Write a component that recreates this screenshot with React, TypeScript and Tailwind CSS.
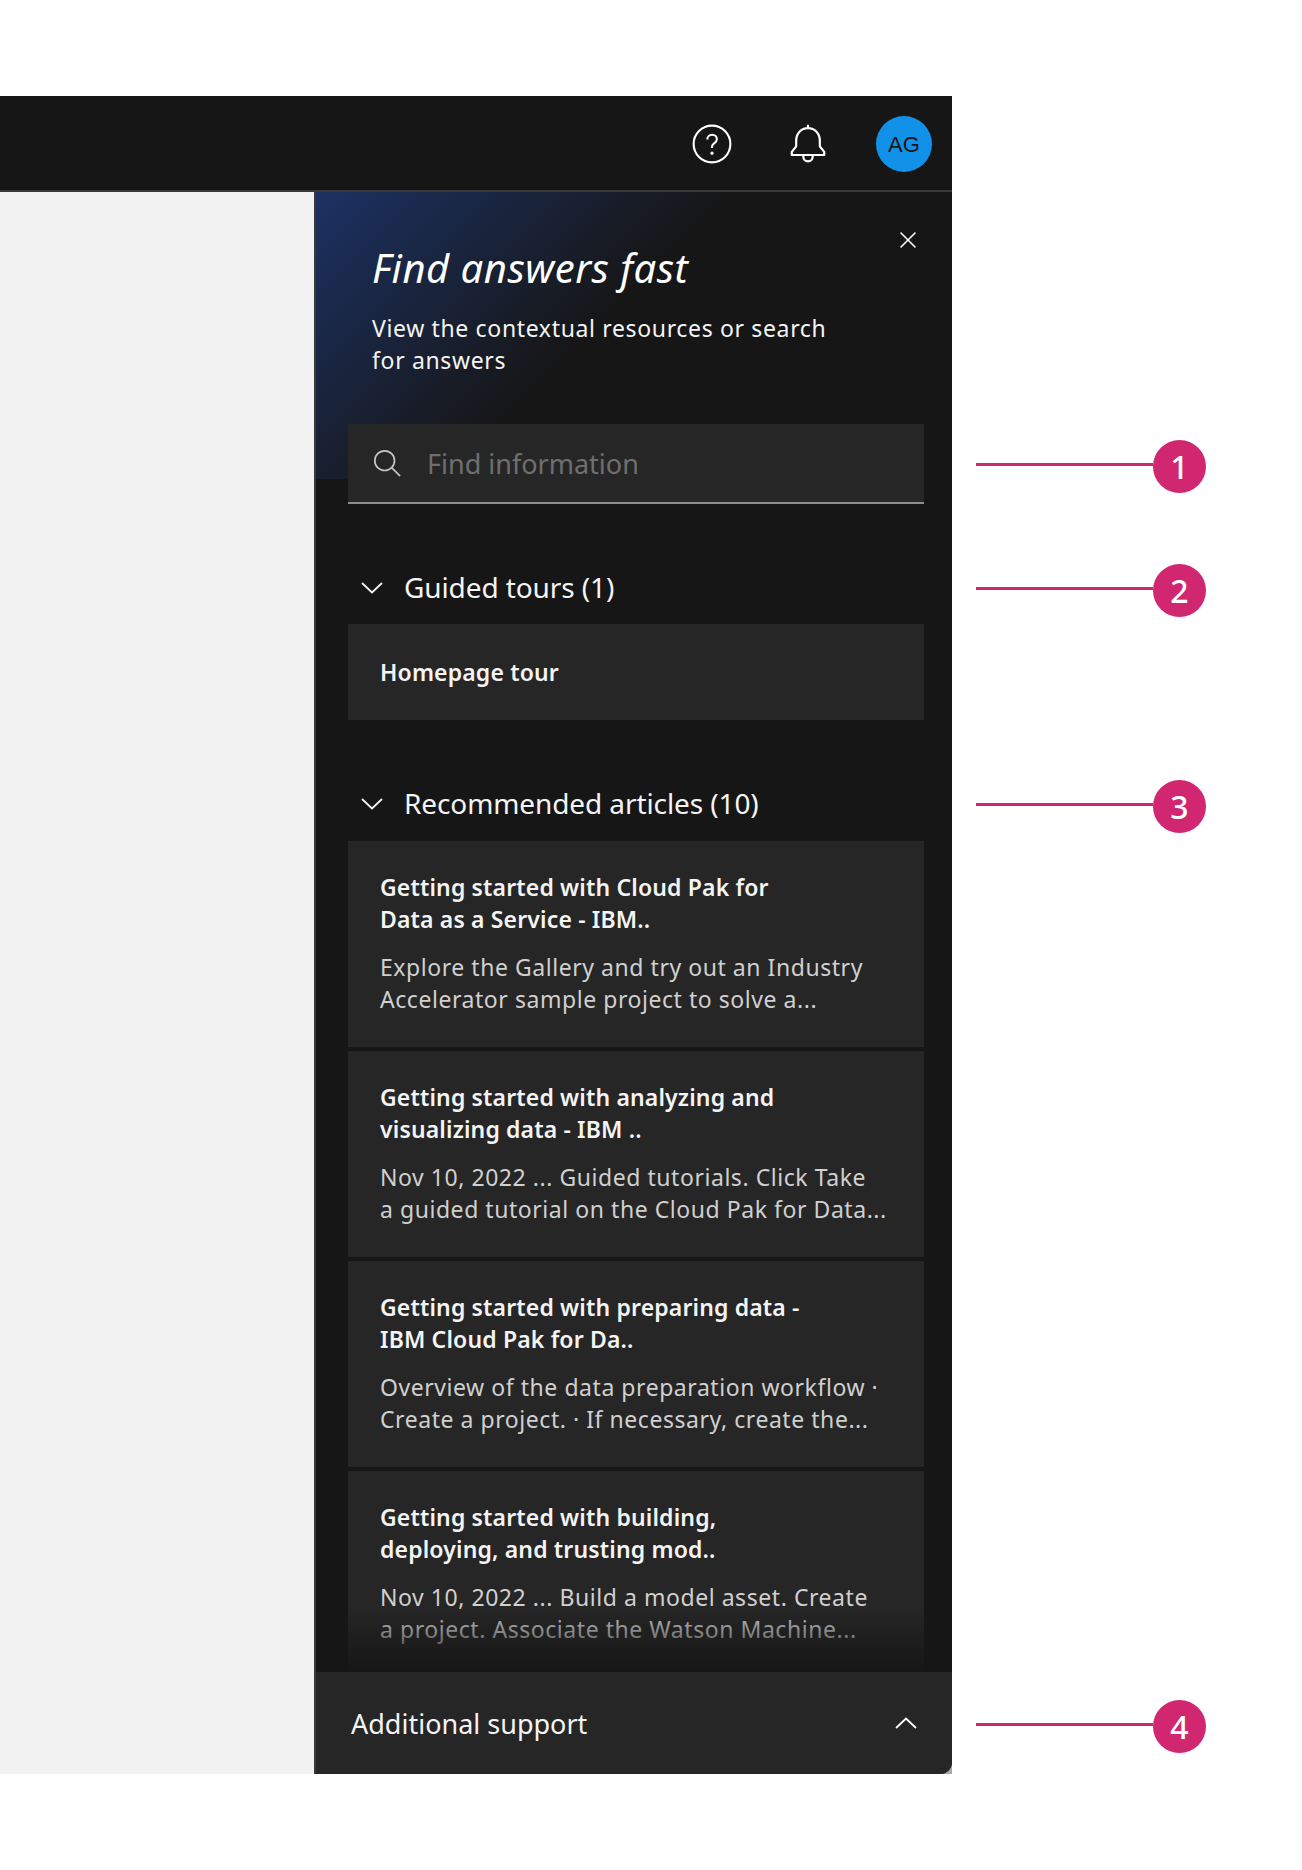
import { X } from 'lucide-react';

const articles = [
  {
    title: ['Getting started with Cloud Pak for', 'Data as a Service - IBM..'],
    body: ['Explore the Gallery and try out an Industry', 'Accelerator sample project to solve a...'],
  },
  {
    title: ['Getting started with analyzing and', 'visualizing data - IBM ..'],
    body: ['Nov 10, 2022 ... Guided tutorials. Click Take', 'a guided tutorial on the Cloud Pak for Data...'],
  },
  {
    title: ['Getting started with preparing data -', 'IBM Cloud Pak for Da..'],
    body: ['Overview of the data preparation workflow ·', 'Create a project. · If necessary, create the...'],
  },
  {
    title: ['Getting started with building,', 'deploying, and trusting mod..'],
    body: ['Nov 10, 2022 ... Build a model asset. Create', 'a project. Associate the Watson Machine...'],
  },
];

const callouts = [
  { n: 1, top: 'top-[440px]' },
  { n: 2, top: 'top-[564px]' },
  { n: 3, top: 'top-[780px]' },
  { n: 4, top: 'top-[1700px]' },
];

const Callout = ({ n, top }: { n: number; top: string }) => (
  <div className={`absolute left-[976px] ${top} flex items-center`}>
    <div className="h-[3px] w-[177px] -translate-y-[2px] bg-[#d12771]" />
    <div className="flex h-[53px] w-[53px] items-center justify-center rounded-full bg-[#d12771] text-[32px] font-medium text-white">
      {n}
    </div>
  </div>
);

const Chevron = ({ up = false, className }: { up?: boolean; className: string }) => (
  <svg viewBox="0 0 22 12" className={className} fill="none" stroke="currentColor" strokeWidth="1.8">
    <path d={up ? 'M1 11L11 1.5L21 11' : 'M1 1L11 10.5L21 1'} />
  </svg>
);

const SectionHeading = ({ label }: { label: string }) => (
  <div className="flex h-[72px] items-center">
    <Chevron className="ml-[13px] h-[12px] w-[22px] text-[#f4f4f4]" />
    <span className="ml-[21px] pb-[3px] text-[28px] tracking-[-0.1px] text-[#f4f4f4]">{label}</span>
  </div>
);

export default function App() {
  return (
    <div className="relative h-[1870px] w-full overflow-hidden bg-white font-['Noto_Sans',sans-serif]">
      <div className="pt-[96px] w-[952px]">
        <header className="flex h-[96px] items-center justify-end border-b-2 border-[#393939] bg-[#161616] pt-[2px]">
          <svg viewBox="0 0 32 32" className="h-[42px] w-[42px] text-white" fill="none" stroke="currentColor" strokeWidth="1.6">
            <circle cx="16" cy="16" r="14" />
            <path d="M12.4 12.6c0-2.1 1.6-3.6 3.7-3.6s3.6 1.4 3.6 3.3c0 1.6-.9 2.4-2.1 3.2-1.1.7-1.6 1.3-1.6 2.7v.8" />
            <circle cx="16" cy="23" r="1.2" fill="currentColor" stroke="none" />
          </svg>
          <svg viewBox="0 0 32 32" className="ml-[53px] h-[44px] w-[44px] text-white" fill="none" stroke="currentColor" strokeWidth="1.6" strokeLinejoin="round">
            <path d="M16 2v2.5M16 4.5c-5 0-8.6 3.8-8.6 9v4.2l-3.2 4v2.3h23.6v-2.3l-3.2-4v-4.2c0-5.2-3.6-9-8.6-9z" />
            <path d="M12.6 24v1.2c0 1.9 1.5 3.4 3.4 3.4s3.4-1.5 3.4-3.4V24" />
          </svg>
          <div className="ml-[46px] mr-[20px] flex h-[56px] w-[56px] items-center justify-center rounded-full bg-[#1192e8] font-['Liberation_Sans',sans-serif] text-[22px] text-[#161616]">
            AG
          </div>
        </header>
        <div className="flex h-[1582px] bg-[#a8a8a8]">
          <div className="w-[314px] bg-[#f2f2f2]" />
          <aside className="relative flex w-[638px] flex-col overflow-hidden rounded-br-[12px] border-l-2 border-[#393939] bg-[#161616]">
            <div className="absolute left-0 top-0 h-[287px] w-full bg-[linear-gradient(135deg,#1c3263_0%,#161616_45%)]" />
            <X className="absolute right-[30px] top-[34px] h-[28px] w-[28px] text-white" strokeWidth={1.3} />
            <div className="relative flex min-h-0 flex-1 flex-col overflow-hidden">
              <div className="shrink-0 pl-[56px] pt-[52px]">
                <h1 className="text-[40px] italic leading-[48px] tracking-[0.5px] text-white">Find answers fast</h1>
                <p className="mt-[20px] text-[23px] leading-[32px] tracking-[0.65px] text-[#f4f4f4]">
                  View the contextual resources or search
                  <br />
                  for answers
                </p>
              </div>
              <div className="ml-[32px] mr-[28px] mt-[48px] flex h-[80px] shrink-0 items-center border-b-2 border-[#8d8d8d] bg-[#262626] pl-[24px]">
                <svg viewBox="0 0 32 32" className="h-[30px] w-[30px] text-[#c6c6c6]" fill="none" stroke="currentColor" strokeWidth="1.8">
                  <circle cx="13.5" cy="13.5" r="10.5" />
                  <path d="M21 21l9 9" />
                </svg>
                <span className="ml-[25px] pt-[2px] text-[27px] text-[#6f6f6f]">Find information</span>
              </div>
              <div className="ml-[32px] mr-[28px] mt-[48px] shrink-0">
                <SectionHeading label="Guided tours (1)" />
              </div>
              <div className="ml-[32px] mr-[28px] flex h-[96px] shrink-0 items-center bg-[#262626] px-[32px] text-[23px] font-semibold tracking-[0.15px] text-[#f4f4f4]">
                Homepage tour
              </div>
              <div className="ml-[32px] mr-[28px] mt-[48px] shrink-0">
                <SectionHeading label="Recommended articles (10)" />
              </div>
              <div className="ml-[32px] mr-[28px] flex shrink-0 flex-col gap-[4px] pt-[1px]">
                {articles.map((a) => (
                  <article key={a.title[0]} className="h-[206px] shrink-0 bg-[#262626] px-[32px] pt-[31px]">
                    <h2 className="text-[23px] font-semibold leading-[31.5px] tracking-[0.15px] text-[#f4f4f4]">
                      {a.title[0]}
                      <br />
                      {a.title[1]}
                    </h2>
                    <p className="mt-[16px] text-[23px] leading-[32px] tracking-[0.55px] text-[#d0d0d0]">
                      {a.body[0]}
                      <br />
                      {a.body[1]}
                    </p>
                  </article>
                ))}
              </div>
              <div className="absolute bottom-0 left-0 h-[66px] w-full bg-gradient-to-b from-[#16161600] to-[#161616]" />
            </div>
            <footer className="flex h-[102px] shrink-0 items-center justify-between bg-[#262626] pl-[35px] pr-[35px]">
              <span className="pt-[2px] text-[27px] text-[#f4f4f4]">Additional support</span>
              <Chevron up className="h-[12px] w-[22px] text-white" />
            </footer>
          </aside>
        </div>
      </div>
      {callouts.map((c) => (
        <Callout key={c.n} n={c.n} top={c.top} />
      ))}
    </div>
  );
}
